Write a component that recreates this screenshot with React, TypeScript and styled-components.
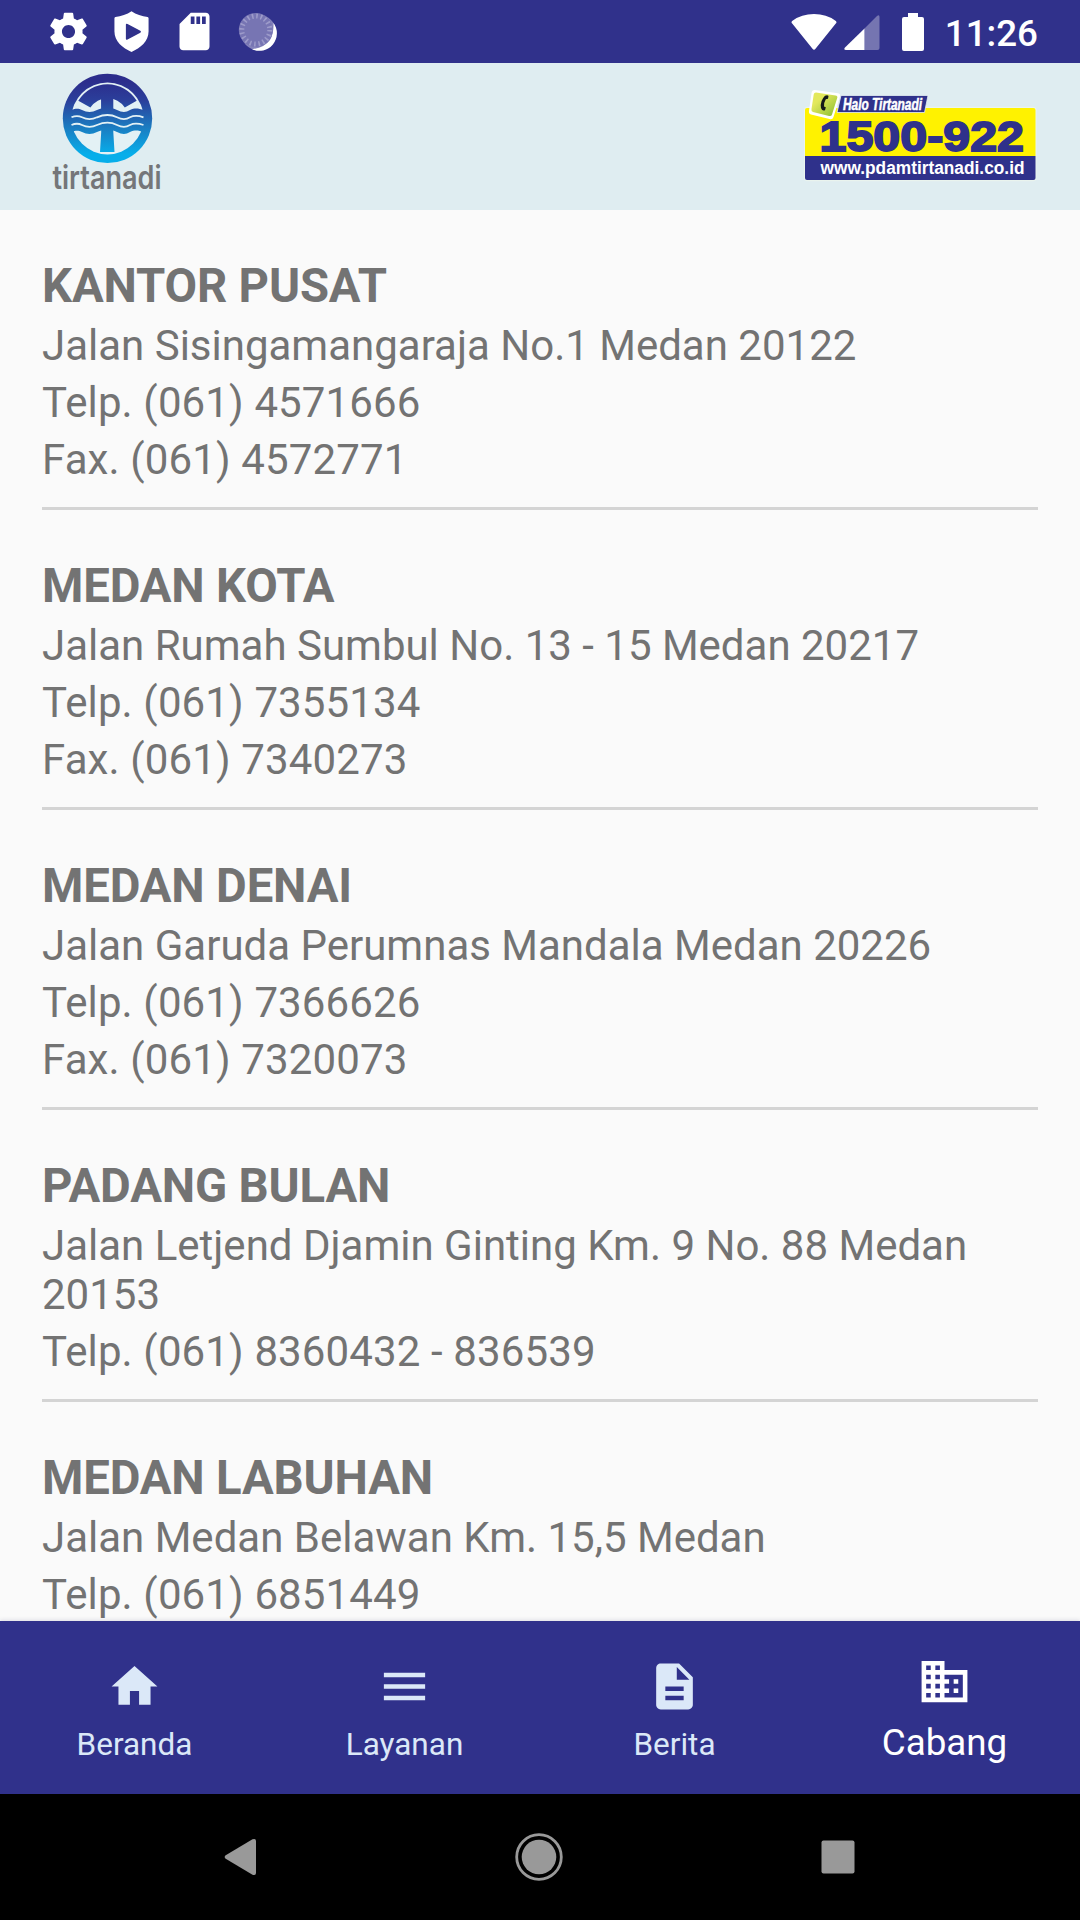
import React from "react";
import styled, { createGlobalStyle } from "styled-components";

const GlobalStyle = createGlobalStyle`
  *, *::before, *::after { box-sizing: border-box; }
  html, body { margin: 0; padding: 0; background: #000; }
  body { font-family: Roboto, "Noto Sans", sans-serif; }
  svg { display: block; flex: none; }
`;

const Screen = styled.div`
  width: 1080px;
  height: 1920px;
  display: flex;
  flex-direction: column;
  overflow: hidden;
  background: #fafafa;
`;

const StatusBar = styled.header`
  flex: none;
  height: 63px;
  padding: 0 42px 0 46px;
  display: flex;
  align-items: center;
  justify-content: space-between;
  background: #30318b;
  color: #fff;
`;

const StatusGroup = styled.div<{ $gap: number }>`
  display: flex;
  align-items: center;
  gap: ${(p) => p.$gap}px;
`;

const Clock = styled.span`
  font-size: 36.75px;
  font-weight: 500;
  line-height: 44px;
  padding-top: 4px;
`;

const AppHeader = styled.div`
  flex: none;
  height: 147px;
  padding: 0 40px 0 46px;
  display: flex;
  justify-content: space-between;
  background: #dfedf1;
`;

const BranchList = styled.main`
  flex: 1;
  min-height: 0;
  overflow: hidden;
  padding: 0 42px;
`;

const Branch = styled.section`
  padding: 48px 0 23px;
  border-bottom: 3px solid #d4d4d4;
  color: #737373;
`;

const BranchName = styled.h2`
  margin: 0 0 7px;
  font-size: 47.25px;
  font-weight: 700;
  line-height: 56px;
  letter-spacing: -0.15px;
`;

const BranchLine = styled.p<{ $numeric?: boolean }>`
  margin: 0;
  font-size: 42px;
  line-height: 49px;
  letter-spacing: ${(p) => (p.$numeric ? 0.13 : 0)}px;

  & + & { margin-top: 8px; }
`;

const TabBar = styled.nav`
  flex: none;
  height: 173px;
  display: grid;
  grid-template-columns: repeat(4, 1fr);
  background: #30318b;
  box-shadow: 0 -1px 4px rgba(40, 40, 90, 0.14);
`;

const Tab = styled.div<{ $active?: boolean }>`
  display: flex;
  flex-direction: column;
  align-items: center;
  padding-top: ${(p) => (p.$active ? 33 : 38)}px;
  padding-right: 1px;
  gap: 12px;
  color: ${(p) => (p.$active ? "#fff" : "#dbe8f8")};
`;

const TabLabel = styled.span<{ $active?: boolean }>`
  font-size: ${(p) => (p.$active ? 36.75 : 31.5)}px;
  line-height: ${(p) => (p.$active ? 43 : 37)}px;
`;

const SystemBar = styled.footer`
  flex: none;
  height: 126px;
  padding: 0 93px 0 91px;
  display: grid;
  grid-template-columns: repeat(3, 1fr);
  align-items: center;
  justify-items: center;
  background: #000;
`;

const Glyph = ({ d, size = 45 }: { d: string; size?: number }) => (
  <svg width={size} height={size} viewBox="0 0 24 24" fill="currentColor">
    <path fillRule="evenodd" d={d} />
  </svg>
);

const icons = {
  gear: "M19.43 12.98c.04-.32.07-.64.07-.98s-.03-.66-.07-.98l2.11-1.65c.19-.15.24-.42.12-.64l-2-3.46c-.12-.22-.39-.3-.61-.22l-2.49 1c-.52-.4-1.08-.73-1.69-.98l-.38-2.65C14.46 2.18 14.25 2 14 2h-4c-.25 0-.46.18-.49.42l-.38 2.65c-.61.25-1.17.59-1.69.98l-2.49-1c-.23-.09-.49 0-.61.22l-2 3.46c-.13.22-.07.49.12.64l2.11 1.65c-.04.32-.07.65-.07.98s.03.66.07.98l-2.11 1.65c-.19.15-.24.42-.12.64l2 3.46c.12.22.39.3.61.22l2.49-1c.52.4 1.08.73 1.69.98l.38 2.65c.03.24.24.42.49.42h4c.25 0 .46-.18.49-.42l.38-2.65c.61-.25 1.17-.59 1.69-.98l2.49 1c.23.09.49 0 .61-.22l2-3.46c.12-.22.07-.49-.12-.64l-2.11-1.65zM12 15.5c-1.93 0-3.5-1.57-3.5-3.5s1.57-3.5 3.5-3.5 3.5 1.57 3.5 3.5-1.57 3.5-3.5 3.5z",
  shield:
    "M12 1.2 C9.5 2.9 6.5 3.9 3.4 4.2 Q2.9 4.3 2.9 4.9 V12 C2.9 17.3 7.2 20.7 12 22.9 C16.8 20.7 21.1 17.3 21.1 12 V4.9 Q21.1 4.3 20.6 4.2 C17.5 3.9 14.5 2.9 12 1.2Z M9 8.4 Q9 7.5 9.9 8 L16.7 11.6 Q17.5 12.1 16.7 12.6 L9.9 16.2 Q9 16.7 9 15.8Z",
  sd: "M18 2h-8L4.02 8 4 20c0 1.1.9 2 2 2h12c1.1 0 2-.9 2-2V4c0-1.1-.9-2-2-2zm-6 6h-2V4h2v4zm3 0h-2V4h2v4zm3 0h-2V4h2v4z",
  home: "M10 20v-6h4v6h5v-8h3L12 3 2 12h3v8z",
  menu: "M3 18h18v-2H3v2zm0-5h18v-2H3v2zm0-7v2h18V6H3z",
  doc: "M14 2H6c-1.1 0-1.99.9-1.99 2L4 20c0 1.1.89 2 1.99 2H18c1.1 0 2-.9 2-2V8l-6-6zm2 16H8v-2h8v2zm0-4H8v-2h8v2zm-3-5V3.5L18.500 9H13z",
  building:
    "M12 7V3H2v18h20V7H12zM6 19H4v-2h2v2zm0-4H4v-2h2v2zm0-4H4V9h2v2zm0-4H4V5h2v2zm4 12H8v-2h2v2zm0-4H8v-2h2v2zm0-4H8V9h2v2zm0-4H8V5h2v2zm10 12h-8v-2h2v-2h-2v-2h2v-2h-2V9h8v10zm-2-8h-2v2h2v-2zm0 4h-2v2h2v-2z",
};

const ProgressGlyph = () => (
  <svg width="45" height="45" viewBox="0 0 45 45">
    <circle cx="23.500" cy="23.500" r="17.800" fill="#8583bb" />
    <path d="M38.500 14 A17.500 17.500 0 0 1 17 40.200 Q29 39 35 31 Q39 24 38.500 14Z" fill="#fff" />
    <circle cx="20.800" cy="21" r="17" fill="#7775b3" />
    <circle cx="20.800" cy="21" r="14" fill="none" stroke="#9d9bca" strokeWidth="5" strokeDasharray="1.600 2.798" />
  </svg>
);

const WifiGlyph = () => (
  <svg width="46" height="38" viewBox="0 0 46 38">
    <path d="M1.200 10.500 Q-.3 9 1.500 7.700 Q10.500 1 23 1 T44.500 7.700 Q46.300 9 44.800 10.500 L24.500 35.800 Q23 37.500 21.500 35.800Z" fill="#fff" />
  </svg>
);

const SignalGlyph = () => (
  <svg width="36" height="38" viewBox="0 0 36 38">
    <path d="M20.500 15.500 L33 3 Q35.500 1.300 35.500 4 V35 Q35.500 37 33.500 37 H20.500Z" fill="#7575b1" />
    <path d="M20.500 15.500 V37 H2 Q-.8 36.700 1 34.500Z" fill="#fff" />
  </svg>
);

const BatteryGlyph = () => (
  <svg width="22" height="38" viewBox="0 0 22 38">
    <path d="M6 0H16V4H20Q22 4 22 6V36Q22 38 20 38H2Q0 38 0 36V6Q0 4 2 4H6Z" fill="#fff" />
  </svg>
);

// One crest line of the wave band, drawn left to right at height y.
const wave = (y: number) =>
  `71.500 ${y} C76 ${y - 2} 79 ${y - 1.5} 82 ${y} C87 ${y + 2.5} 92 ${y + 2.5} 97 ${y} C104 ${y - 3} 111 ${y - 3} 117 ${y} C122 ${y + 2.5} 126 ${y + 2.5} 130 ${y} C135 ${y - 2.5} 139 ${y - 1.5} 143.500 ${y}`;

const TirtanadiLogo = () => (
  <svg width="164" height="147" viewBox="46 63 164 147">
    <defs>
      <linearGradient id="water" gradientUnits="userSpaceOnUse" x1="0" y1="74" x2="0" y2="163">
        <stop offset="0.080" stopColor="#2c2d8c" />
        <stop offset="0.300" stopColor="#2b3f9b" />
        <stop offset="0.600" stopColor="#1b7cc1" />
        <stop offset="0.900" stopColor="#07aeea" />
      </linearGradient>
      <clipPath id="lowerHalf">
        <path d={`M${wave(132)} V170 H71.500Z`} />
      </clipPath>
      <clipPath id="upperHalf">
        <path d={`M${wave(110)} V70 H71.500Z`} />
      </clipPath>
    </defs>
    <circle cx="107.500" cy="118.400" r="44.700" fill="url(#water)" />
    <g fill="#e3f1f5">
      <circle cx="107.500" cy="118.400" r="36" clipPath="url(#upperHalf)" />
      <circle cx="107.500" cy="118.400" r="36" clipPath="url(#lowerHalf)" />
    </g>
    <g fill="url(#water)">
      <path d="M78.300 100.700 A34.200 34.200 0 0 1 136.700 100.700 L124.800 107.500 A20.500 20.500 0 0 0 90.400 107.500Z" />
      <path d="M101 90 H113.300 V132 L114.500 152 H100 L101.200 132Z" />
    </g>
    <g fill="none" stroke="#e3f1f5" strokeWidth="1.800">
      <path d={`M${wave(117.300)}`} />
      <path d={`M${wave(125)}`} />
    </g>
    <text x="52.500" y="189" fontFamily="Inter, sans-serif" fontWeight="600" fontSize="32" fill="#747679" textLength="109" lengthAdjust="spacingAndGlyphs">
      tirtanadi
    </text>
  </svg>
);

const CallCenterBadge = () => (
  <svg width="240" height="147" viewBox="800 63 240 147">
    <defs>
      <linearGradient id="phone" x1="0" y1="0" x2="1" y2="1">
        <stop offset="0.300" stopColor="#e3e85c" />
        <stop offset="1" stopColor="#86bd31" />
      </linearGradient>
    </defs>
    <rect x="804" y="106.700" width="232.500" height="74.500" rx="3.500" fill="#eaf4ee" />
    <path d="M805 156 V110 Q805 108 807 108 H1033.500 Q1035.500 108 1035.500 110 V156Z" fill="#fff200" />
    <path d="M805 156 H1035.500 V178 Q1035.500 180 1033.500 180 H807 Q805 180 805 178Z" fill="#2f318b" />
    <path d="M841 95.500 H928 L924.500 112.500 H837Z" fill="#2f318b" stroke="#e6f0f2" strokeWidth="0.800" />
    <path d="M815 90 L838 93.300 Q840.800 93.800 840 96.500 L833.500 117 Q832.500 120 829.500 119 L811 114.500 Q808.500 113.500 809 111 L811.500 93 Q812 89.800 815 90Z" fill="#fff" />
    <path d="M816 92.500 L835.500 95.500 Q838 96 837.200 98 L832 114.500 Q831.500 116.500 829 116 L813 112 Q811 111.500 811.500 109 L813.700 94.500 Q814 92.500 816 92.500Z" fill="url(#phone)" />
    <path d="M825 95.800 Q827.500 94.500 828.500 96 L828 98.800 L825.800 99.200 Q823.800 102.500 824 106.500 L825.800 107.300 L825 110.200 Q822.300 111.500 821 108 Q819.800 101 825 95.800Z" fill="#151a18" />
    <text x="843" y="109.600" fontFamily="Liberation Sans, Arial, sans-serif" fontWeight="700" fontStyle="italic" fontSize="15.700" fill="#fff" stroke="#fff" strokeWidth="0.500" textLength="79" lengthAdjust="spacingAndGlyphs">
      Halo Tirtanadi
    </text>
    <text x="819.500" y="150.700" fontFamily="Liberation Sans, Arial, sans-serif" fontWeight="700" fontSize="42" fill="#2f318b" stroke="#2f318b" strokeWidth="1.800" textLength="204.500" lengthAdjust="spacingAndGlyphs">
      1500-922
    </text>
    <text x="820.500" y="173.600" fontFamily="Liberation Sans, Arial, sans-serif" fontWeight="700" fontSize="18" fill="#fff" textLength="204" lengthAdjust="spacingAndGlyphs">
      www.pdamtirtanadi.co.id
    </text>
  </svg>
);

const branches = [
  { name: "KANTOR PUSAT", address: "Jalan Sisingamangaraja No.1 Medan 20122", phones: ["Telp. (061) 4571666", "Fax. (061) 4572771"] },
  { name: "MEDAN KOTA", address: "Jalan Rumah Sumbul No. 13 - 15 Medan 20217", phones: ["Telp. (061) 7355134", "Fax. (061) 7340273"] },
  { name: "MEDAN DENAI", address: "Jalan Garuda Perumnas Mandala Medan 20226", phones: ["Telp. (061) 7366626", "Fax. (061) 7320073"] },
  { name: "PADANG BULAN", address: "Jalan Letjend Djamin Ginting Km. 9 No. 88 Medan 20153", phones: ["Telp. (061) 8360432 - 836539"] },
  { name: "MEDAN LABUHAN", address: "Jalan Medan Belawan Km. 15,5 Medan", phones: ["Telp. (061) 6851449"] },
];

const tabs = [
  { label: "Beranda", icon: icons.home },
  { label: "Layanan", icon: icons.menu },
  { label: "Berita", icon: icons.doc },
  { label: "Cabang", icon: icons.building, active: true },
];

export default function App() {
  return (
    <>
      <GlobalStyle />
      <Screen>
        <StatusBar>
          <StatusGroup $gap={18}>
            <Glyph d={icons.gear} />
            <Glyph d={icons.shield} />
            <Glyph d={icons.sd} />
            <ProgressGlyph />
          </StatusGroup>
          <StatusGroup $gap={22}>
            <StatusGroup $gap={7}>
              <WifiGlyph />
              <SignalGlyph />
            </StatusGroup>
            <StatusGroup $gap={21}>
              <BatteryGlyph />
              <Clock>11:26</Clock>
            </StatusGroup>
          </StatusGroup>
        </StatusBar>
        <AppHeader>
          <TirtanadiLogo />
          <CallCenterBadge />
        </AppHeader>
        <BranchList>
          {branches.map((b) => (
            <Branch key={b.name}>
              <BranchName>{b.name}</BranchName>
              <BranchLine>{b.address}</BranchLine>
              {b.phones.map((line) => (
                <BranchLine key={line} $numeric>
                  {line}
                </BranchLine>
              ))}
            </Branch>
          ))}
        </BranchList>
        <TabBar>
          {tabs.map((t) => (
            <Tab key={t.label} $active={t.active}>
              <Glyph d={t.icon} size={55} />
              <TabLabel $active={t.active}>{t.label}</TabLabel>
            </Tab>
          ))}
        </TabBar>
        <SystemBar>
          <svg width="34" height="38" viewBox="0 0 34 38">
            <path d="M2.300 17.500 L29.500 1.300 Q33 0 33 3 V35 Q33 38 29.500 36.700 L2.300 20.500 Q.8 19 2.300 17.500Z" fill="#999" />
          </svg>
          <svg width="48" height="48" viewBox="0 0 48 48">
            <circle cx="24" cy="24" r="22.300" fill="none" stroke="#999" strokeWidth="2.800" />
            <circle cx="24" cy="24" r="17.300" fill="#999" />
          </svg>
          <svg width="34" height="34" viewBox="0 0 34 34">
            <rect x="0.500" y="0.500" width="33" height="33" rx="2" fill="#999" />
          </svg>
        </SystemBar>
      </Screen>
    </>
  );
}
